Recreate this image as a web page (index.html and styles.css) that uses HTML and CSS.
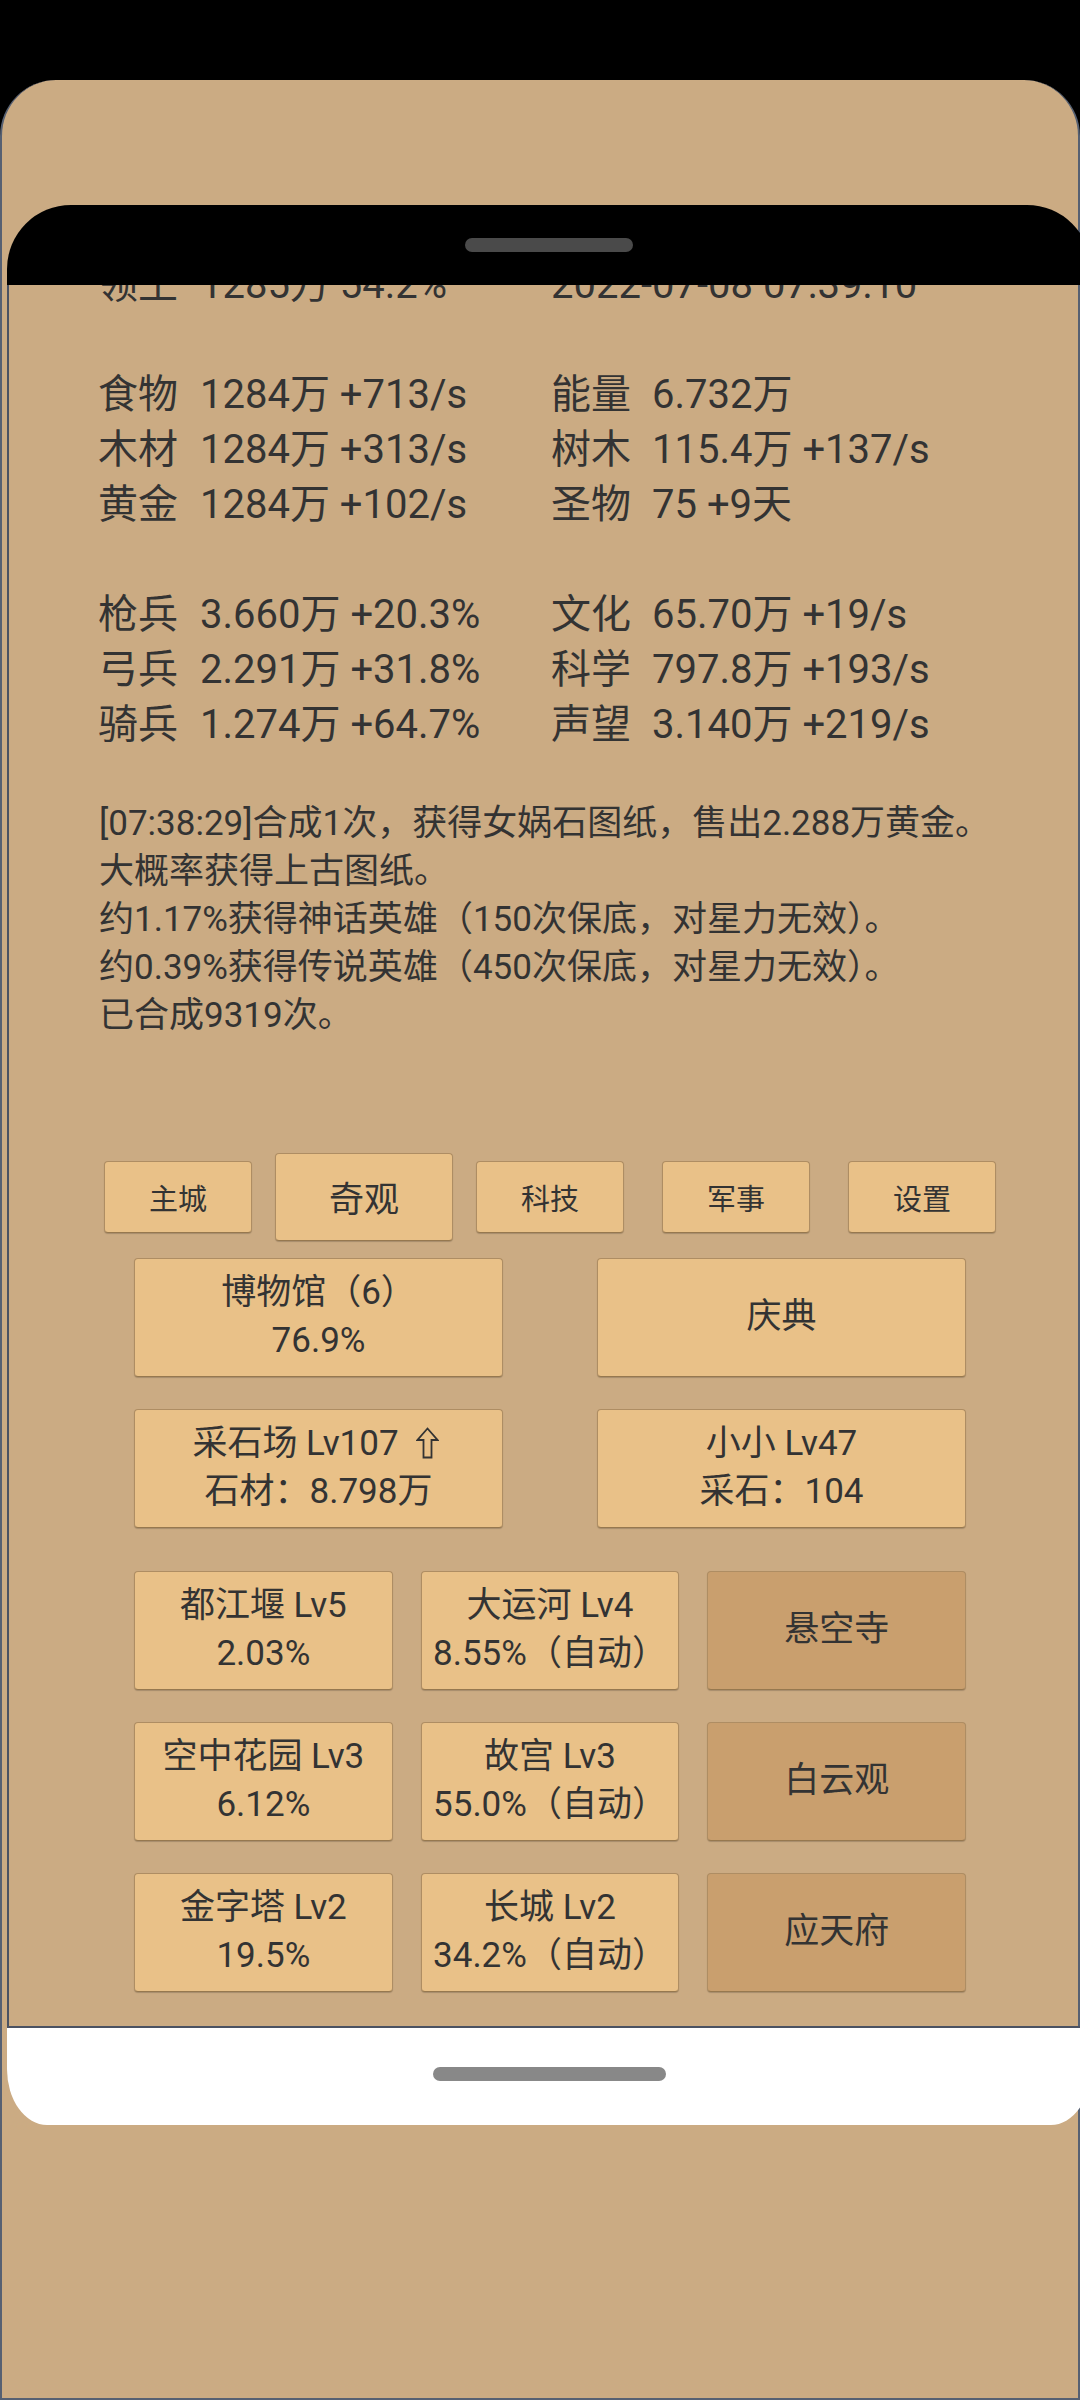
FILE: index.html
```html
<!DOCTYPE html>
<html lang="zh-CN">
<head>
    <meta charset="UTF-8">
    <meta name="viewport" content="width=device-width, initial-scale=1.0">
    <title>奇观</title>

    <link rel="stylesheet" href="styles.css">
</head>
<body>
    <div class="phone">
        <div class="screen">
            <div class="top-bar"><span class="pill"></span></div>

            <div class="content">
                <!-- resources -->
                <div class="stats">
                    <div class="row"><span>领土</span><span>1285万 54.2%</span><span class="wide">2022-07-08 07:39:10</span></div>
                    <div class="row"></div>
                    <div class="row"><span>食物</span><span>1284万 +713/s</span><span>能量</span><span>6.732万</span></div>
                    <div class="row"><span>木材</span><span>1284万 +313/s</span><span>树木</span><span>115.4万 +137/s</span></div>
                    <div class="row"><span>黄金</span><span>1284万 +102/s</span><span>圣物</span><span>75 +9天</span></div>
                    <div class="row"></div>
                    <div class="row"><span>枪兵</span><span>3.660万 +20.3%</span><span>文化</span><span>65.70万 +19/s</span></div>
                    <div class="row"><span>弓兵</span><span>2.291万 +31.8%</span><span>科学</span><span>797.8万 +193/s</span></div>
                    <div class="row"><span>骑兵</span><span>1.274万 +64.7%</span><span>声望</span><span>3.140万 +219/s</span></div>
                </div>

                <!-- message log -->
                <div class="log">
                    <p>[07:38:29]合成1次，获得女娲石图纸，售出2.288万黄金。</p>
                    <p>大概率获得上古图纸。</p>
                    <p>约1.17%获得神话英雄（150次保底，对星力无效）。</p>
                    <p>约0.39%获得传说英雄（450次保底，对星力无效）。</p>
                    <p>已合成9319次。</p>
                </div>

                <!-- tabs -->
                <div class="tabs">
                    <button class="tab">主城</button>
                    <button class="tab active">奇观</button>
                    <button class="tab">科技</button>
                    <button class="tab">军事</button>
                    <button class="tab">设置</button>
                </div>

                <!-- wonders -->
                <div class="wonders">
                    <div class="grid-2">
                        <button class="card"><span>博物馆（6）</span><span>76.9%</span></button>
                        <button class="card"><span>庆典</span></button>
                        <button class="card">
                            <span>采石场 Lv107<svg class="up" width="23" height="32" viewBox="0 0 23 32"><path d="M11.5 1.5 L21.5 13 H15.5 V30.5 H7.5 V13 H1.5 Z" fill="none" stroke="#333" stroke-width="1.8" stroke-linejoin="miter"/></svg></span>
                            <span>石材：8.798万</span>
                        </button>
                        <button class="card"><span>小小 Lv47</span><span>采石：104</span></button>
                    </div>
                    <div class="grid-3">
                        <button class="card"><span>都江堰 Lv5</span><span>2.03%</span></button>
                        <button class="card"><span>大运河 Lv4</span><span>8.55%（自动）</span></button>
                        <button class="card dark"><span>悬空寺</span></button>
                        <button class="card"><span>空中花园 Lv3</span><span>6.12%</span></button>
                        <button class="card"><span>故宫 Lv3</span><span>55.0%（自动）</span></button>
                        <button class="card dark"><span>白云观</span></button>
                        <button class="card"><span>金字塔 Lv2</span><span>19.5%</span></button>
                        <button class="card"><span>长城 Lv2</span><span>34.2%（自动）</span></button>
                        <button class="card dark"><span>应天府</span></button>
                    </div>
                </div>
            </div>

            <div class="bottom-bar"><span class="pill"></span></div>
        </div>
    </div>
</body>
</html>
```

FILE: styles.css
```css
* {
    box-sizing: border-box;
}

html,
body {
    margin: 0;
    padding: 0;
    overflow: hidden;
}

body {
    background-color: #000;
    padding-top: 80px;
    font-family: Roboto, "Noto Sans CJK SC", sans-serif;
    color: #333;
}

.phone {
    height: 2320px;
    padding: 125px 0 0 5px;
    background-color: #cbab83;
    border: 2px solid #566072;
    border-top: 0;
    border-radius: 56px 56px 0 0;
}

.screen {
    width: 1084px;
}

.top-bar {
    height: 80px;
    background-color: #000;
    border-radius: 64px 64px 0 0;
    display: flex;
    align-items: center;
    justify-content: center;
}

.pill {
    width: 168px;
    height: 14px;
    border-radius: 7px;
    background-color: #4a4a4a;
}

.content {
    height: 1743px;
    border-left: 2px solid #4b5262;
    border-bottom: 2px solid #4b5262;
    overflow: hidden;
}

/* resources */
.stats {
    margin-top: -28px;
    padding-left: 89px;
    font-size: 40px;
    line-height: 55px;
}

.row {
    display: grid;
    grid-template-columns: 102px 351px 101px auto;
    height: 55px;
    white-space: nowrap;
}

.row .wide {
    grid-column: 3 / 5;
}

.log {
    margin-top: 48px;
    padding-left: 90px;
    font-size: 35px;
    line-height: 48px;
}

.log p {
    margin: 0;
    white-space: nowrap;
}

/* tabs */
.tabs {
    width: 930px;
    margin: 113px auto 0;
    display: grid;
    grid-template-columns: repeat(5, 1fr);
    align-items: center;
    justify-items: center;
}

.tab,
.card {
    font-family: Roboto, "Noto Sans CJK SC", sans-serif;
    color: #333;
    background-color: #e9c188;
    border: 1px solid #ae8d63;
    border-bottom-color: #96784f;
    border-radius: 4px;
    box-shadow: 0 1px 1px rgba(0, 0, 0, 0.18);
    padding: 0;
    cursor: pointer;
}

.tab {
    font-size: 29px;
    width: 5.1em;
    height: 2.5em;
}

.tab.active {
    font-size: 35px;
}

/* wonders */
.wonders {
    width: 832px;
    margin: 17px auto 0;
}

.grid-2 {
    display: grid;
    grid-template-columns: 1fr 1fr;
    column-gap: 94px;
    row-gap: 32px;
}

.grid-3 {
    display: grid;
    grid-template-columns: repeat(3, 1fr);
    column-gap: 28px;
    row-gap: 32px;
    margin-top: 43px;
}

.card {
    height: 119px;
    font-size: 35px;
    line-height: 48px;
    display: flex;
    flex-direction: column;
    align-items: center;
    justify-content: center;
    white-space: nowrap;
}

.card.dark {
    background-color: #c99f6e;
}

.up {
    margin: 0 6px 0 17px;
    vertical-align: -4px;
}

.bottom-bar {
    height: 97px;
    padding-bottom: 5px;
    background-color: #fff;
    border-radius: 0 0 40px 40px / 0 0 56px 56px;
    display: flex;
    align-items: center;
    justify-content: center;
}

.bottom-bar .pill {
    width: 233px;
    background-color: #888;
}
```
